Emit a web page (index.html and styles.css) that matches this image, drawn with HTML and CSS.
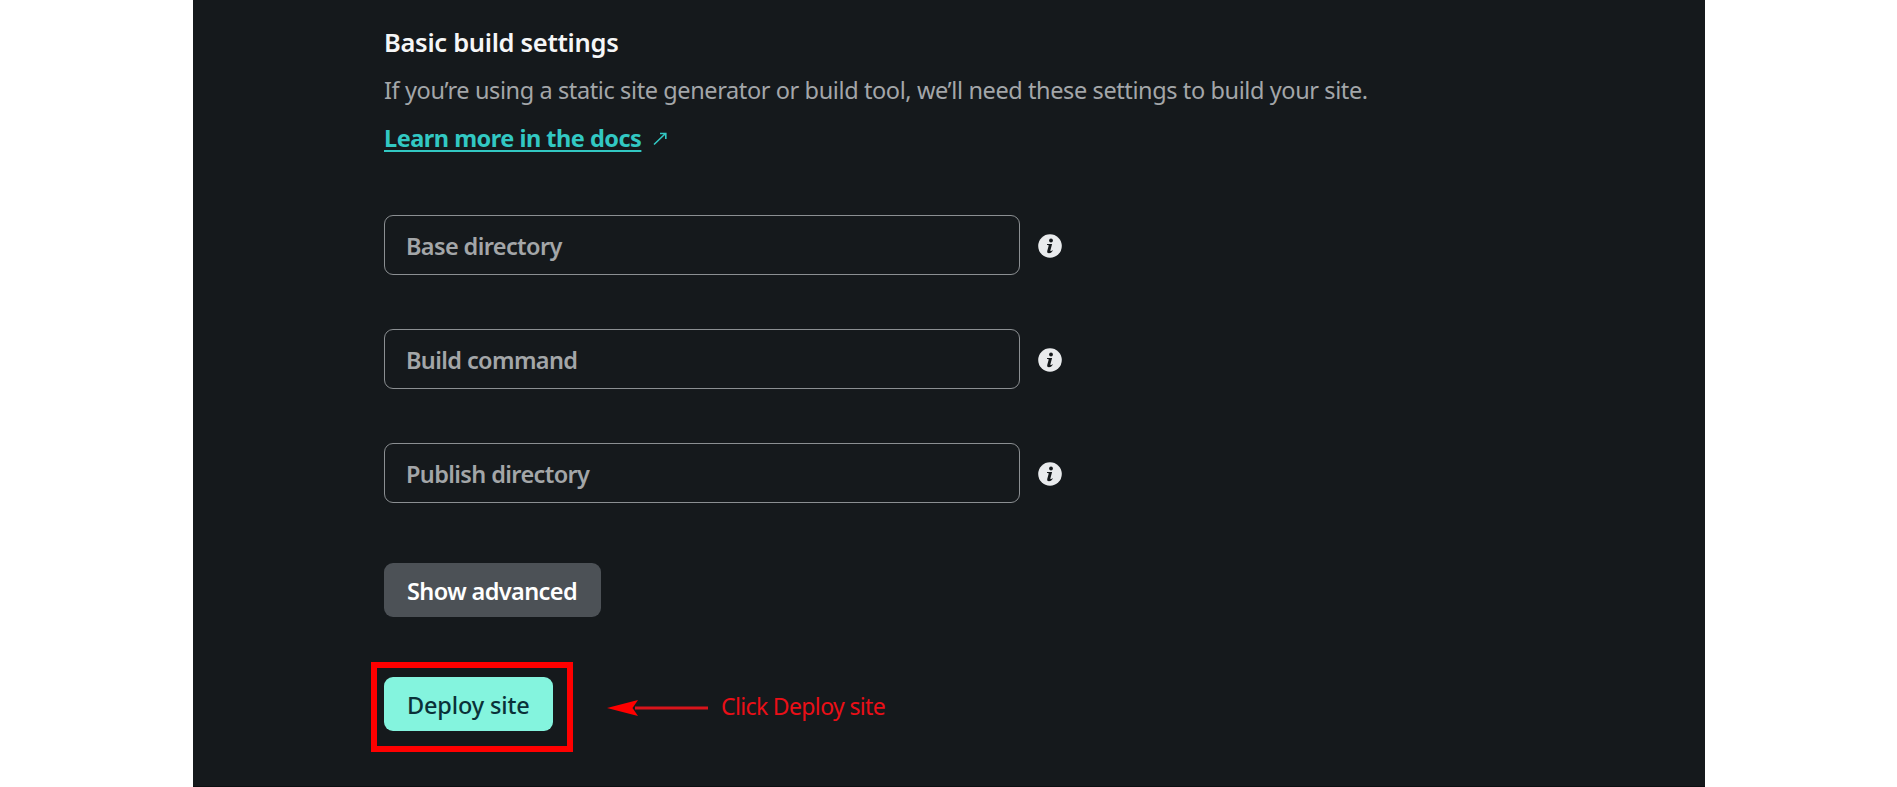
FILE: index.html
```html
<!DOCTYPE html>
<html lang="en">
<head>
<meta charset="utf-8">
<title>Basic build settings</title>
<link rel="stylesheet" href="styles.css">
</head>
<body>
<svg class="defs" width="0" height="0" aria-hidden="true">
  <symbol id="info" viewBox="0 0 24 24">
    <circle cx="12" cy="12" r="11.8" fill="#e9ebed"/>
    <circle cx="13" cy="6.5" r="1.9" fill="#15191c"/>
    <path d="M9 9.9h5.1l-1.7 6.3q-.2.9.4.9.6 0 1.4-.9l.6.5q-1.7 2.6-3.8 2.6-2.3 0-1.7-2.5l1.3-4.8q.2-.8-.5-.9l-1.1-.2z" fill="#15191c"/>
  </symbol>
</svg>
<main class="panel">
  <h2 class="title">Basic build settings</h2>
  <p class="description">If you’re using a static site generator or build tool, we’ll need these settings to build your site.</p>
  <p class="docs">
    <a class="docs-link" href="#">Learn more in the docs</a>
    <svg class="docs-arrow" width="14" height="14" viewBox="0 0 14 14"><path d="M1 12.500 12.500 1.500M7 1.500h5.800v5.500" fill="none" stroke="#32c8c3" stroke-width="1.6"/></svg>
  </p>
  <form class="fields">
    <div class="field"><div class="input">Base directory</div><svg class="info"><use href="#info"/></svg></div>
    <div class="field"><div class="input">Build command</div><svg class="info"><use href="#info"/></svg></div>
    <div class="field"><div class="input">Publish directory</div><svg class="info"><use href="#info"/></svg></div>
  </form>
  <button class="button advanced">Show advanced</button>
  <div class="deploy-row">
    <div class="highlight"><button class="button deploy">Deploy site</button></div>
    <svg class="pointer" width="102" height="18" viewBox="0 0 102 18">
      <path d="M28 9H101" stroke="#d9141b" stroke-width="3"/>
      <path d="M0 9 31 1 25.500 9 31 17z" fill="#f00"/>
    </svg>
    <span class="note">Click Deploy site</span>
  </div>
</main>
</body>
</html>
```
FILE: styles.css
```css
* { box-sizing: border-box; }
body { margin: 0; background: #fff; font-family: "Noto Sans", "Open Sans", sans-serif; }
.defs { display: block; }
.panel {
  width: 1512px;
  height: 787px;
  margin-left: 193px;
  padding: 23px 0 0 191px;
  background: #15191c;
  border-bottom: 1px solid #0c0f11;
  overflow: hidden;
}
.title, .description, .docs { margin: 0; white-space: nowrap; }
.title { height: 38px; line-height: 38px; font-size: 25.5px; font-weight: 600; letter-spacing: -0.3px; color: #f5f6f7; }
.description { height: 36px; margin-top: 11px; line-height: 36px; font-size: 23.5px; letter-spacing: -0.395px; color: #a3a6a9; }
.docs { display: flex; align-items: center; gap: 12px; height: 36px; margin-top: 12px; }
.docs-link {
  line-height: 36px;
  font-size: 23.5px;
  font-weight: 700;
  letter-spacing: -0.5px;
  color: #32c8c3;
  text-decoration: underline;
  text-decoration-thickness: 2px;
  text-underline-offset: 3px;
  text-decoration-skip-ink: none;
}
.docs-arrow { margin-top: 2px; }
.fields { display: flex; flex-direction: column; gap: 54px; margin-top: 59px; }
.field { display: flex; align-items: center; gap: 18px; height: 60px; }
.input {
  display: flex;
  align-items: center;
  width: 636px;
  height: 60px;
  padding: 2px 0 0 21px;
  border: 1px solid #8b8f92;
  border-radius: 9px;
  font-size: 23.5px;
  font-weight: 600;
  letter-spacing: -0.62px;
  color: #a3a6a8;
}
.info { width: 24px; height: 24px; margin-top: 2px; }
.button {
  display: flex;
  align-items: center;
  height: 54px;
  padding: 2px 0 0 23px;
  border: 0;
  border-radius: 9px;
  font-family: inherit;
  font-size: 23.5px;
  white-space: nowrap;
}
.advanced { width: 217px; margin-top: 60px; background: #4c5156; color: #fff; font-weight: 600; letter-spacing: -0.6px; }
.deploy-row { display: flex; align-items: center; margin: 45px 0 0 -13px; }
.highlight { width: 202px; height: 90px; padding: 9px 0 0 7px; border: 6px solid #f00; }
.deploy { width: 169px; background: #84f4de; color: #0a3138; font-weight: 500; letter-spacing: -0.15px; }
.pointer { margin: 2px 12px 0 34px; }
.note { margin-top: -3px; font-size: 23px; line-height: 36px; letter-spacing: -0.64px; color: #ea0f17; white-space: nowrap; }
```
